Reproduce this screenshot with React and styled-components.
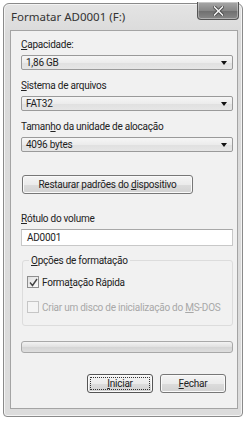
import React from "react";
import styled, { createGlobalStyle } from "styled-components";

const Global = createGlobalStyle`
  html, body { margin: 0; padding: 0; background: #ffffff; }
  body { font-family: Roboto, "Noto Sans", sans-serif; font-size: 10px; letter-spacing: -0.25px; color: #1e1e1e; }
  * { box-sizing: border-box; }
`;

const Window = styled.div`
  margin: 3px 0 0 3px;
  width: 240px;
  height: 414px;
  border: 1px solid #8a8a8a;
  border-radius: 6px 6px 4px 4px;
  background: linear-gradient(#e4e4e4, #dadada 30px, #dcdcdc);
  box-shadow: inset 0 0 0 1px #f4f4f4;
  display: flex;
  flex-direction: column;
`;

const TitleBar = styled.div`
  height: 26px;
  display: flex;
  align-items: flex-start;
  justify-content: space-between;
  padding-left: 7px;
`;

const Title = styled.span`
  margin-top: 5px;
  font-family: "Noto Sans", sans-serif;
  font-size: 11.5px;
  letter-spacing: 0;
  color: #333;
`;

const CloseBtn = styled.div`
  width: 42px;
  height: 18px;
  margin-top: -2px;
  margin-right: 3px;
  border: 1px solid #555;
  border-top: none;
  border-radius: 0 0 4px 4px;
  background: linear-gradient(#a8a8a8, #888 50%, #6e6e6e 51%, #888);
  box-shadow: inset 0 0 0 1px rgba(255,255,255,0.35);
  display: flex;
  align-items: center;
  justify-content: center;
`;

const Panel = styled.div`
  flex: 1;
  margin: 0 4px 7px 6px;
  border: 1px solid #a4a4a4;
  background: #f1f1f1;
  padding: 6px 4px 0 10px;
  display: flex;
  flex-direction: column;
`;

const Label = styled.div`
  line-height: 15px;
  margin-top: ${p => p.$mt || 0}px;
  margin-bottom: 3px;
  color: #222;
`;

const U = styled.span`
  text-decoration: underline;
  text-underline-offset: 1px;
`;

const Text = styled.span`
  white-space: nowrap;
`;

const Select = styled.div`
  height: 15px;
  border: 1px solid #9a9a9a;
  border-radius: 2px;
  background: linear-gradient(#f6f6f6, #ececec 50%, #e0e0e0 51%, #e6e6e6);
  display: flex;
  align-items: center;
  justify-content: space-between;
  padding: 0 5px 0 4px;
`;

const Arrow = styled.span`
  width: 0;
  height: 0;
  border-left: 3.5px solid transparent;
  border-right: 3.5px solid transparent;
  border-top: 4px solid #111;
`;

const Button = styled.div`
  width: ${p => p.$w}px;
  height: 19px;
  border: 1px solid #777;
  border-radius: 3px;
  background: linear-gradient(#f4f4f4, #ebebeb 50%, #dcdcdc 51%, #d2d2d2);
  box-shadow: inset 0 0 0 1px #fafafa;
  display: flex;
  align-items: center;
  justify-content: center;
  color: #222;
`;

const RestoreButton = styled(Button)`
  margin-top: 23px;
  margin-left: 1px;
`;

const Input = styled.div`
  height: 17px;
  border: 1px solid #c8c8c8;
  border-top-color: #a8a8a8;
  background: #fff;
  padding-left: 5px;
  display: flex;
  align-items: center;
`;

const Group = styled.fieldset`
  margin: 9px 0 0 1px;
  padding: 10px 4px 12px 4px;
  border: 1px solid #dcdcdc;
  border-radius: 3px;
  display: flex;
  flex-direction: column;
  gap: 13px;
`;

const Legend = styled.legend`
  padding: 0 2px;
  margin-left: 2px;
  color: #222;
`;

const CheckRow = styled.div`
  display: flex;
  align-items: center;
  gap: 3px;
  color: ${p => (p.$disabled ? "#a8a8a8" : "#222")};
`;

const Box = styled.div`
  flex: none;
  width: 12px;
  height: 12px;
  border: 1px solid ${p => (p.$disabled ? "#c6c6c6" : "#8e8e8e")};
  background: ${p => (p.$disabled ? "#f4f4f4" : "linear-gradient(135deg, #e0e0e0, #fafafa)")};
  display: flex;
  align-items: center;
  justify-content: center;
`;

const Progress = styled.div`
  margin-top: 15px;
  height: 12px;
  border: 1px solid #a8a8a8;
  border-radius: 3px;
  background: linear-gradient(#f2f2f2, #e0e0e0 50%, #d4d4d4 51%, #dedede);
`;

const Footer = styled.div`
  margin-top: 21px;
  display: flex;
  justify-content: flex-end;
  gap: 7px;
  padding-right: 7px;
`;

const FocusButton = styled(Button)`
  position: relative;
  border-color: #555;
  &::after {
    content: "";
    position: absolute;
    inset: 2px;
    border: 1px dotted #333;
    border-radius: 1px;
  }
`;

export default function App() {
  return (
    <>
      <Global />
      <Window>
        <TitleBar>
          <Title>Formatar AD0001 (F:)</Title>
          <CloseBtn>
            <svg width="11" height="10" viewBox="0 0 11 10">
              <path d="M1.5 1 L9.5 9 M9.5 1 L1.5 9" stroke="#444" strokeWidth="3.2" strokeLinecap="square" />
              <path d="M1.5 1 L9.5 9 M9.5 1 L1.5 9" stroke="#f2f2f2" strokeWidth="1.6" strokeLinecap="square" />
            </svg>
          </CloseBtn>
        </TitleBar>
        <Panel>
          <Label><U>C</U>apacidade:</Label>
          <Select><Text>1,86 GB</Text><Arrow /></Select>
          <Label $mt={8}><U>S</U>istema de arquivos</Label>
          <Select><Text>FAT32</Text><Arrow /></Select>
          <Label $mt={8}>Taman<U>h</U>o da unidade de alocação</Label>
          <Select><Text>4096 bytes</Text><Arrow /></Select>
          <RestoreButton $w={171}><Text>Restaurar padrões do <U>d</U>ispositivo</Text></RestoreButton>
          <Label $mt={17}><U>R</U>ótulo do volume</Label>
          <Input>AD0001</Input>
          <Group>
            <Legend><U>O</U>pções de formatação</Legend>
            <CheckRow>
              <Box>
                <svg width="9" height="9" viewBox="0 0 9 9">
                  <path d="M1 4.5 L3.5 7.5 L8 1" fill="none" stroke="#444" strokeWidth="1.4" />
                </svg>
              </Box>
              <Text>Forma<U>t</U>ação Rápida</Text>
            </CheckRow>
            <CheckRow $disabled>
              <Box $disabled />
              <Text>Criar um disco de inicialização do <U>M</U>S-DOS</Text>
            </CheckRow>
          </Group>
          <Progress />
          <Footer>
            <FocusButton $w={66}><Text><U>I</U>niciar</Text></FocusButton>
            <Button $w={66}><Text><U>F</U>echar</Text></Button>
          </Footer>
        </Panel>
      </Window>
    </>
  );
}
